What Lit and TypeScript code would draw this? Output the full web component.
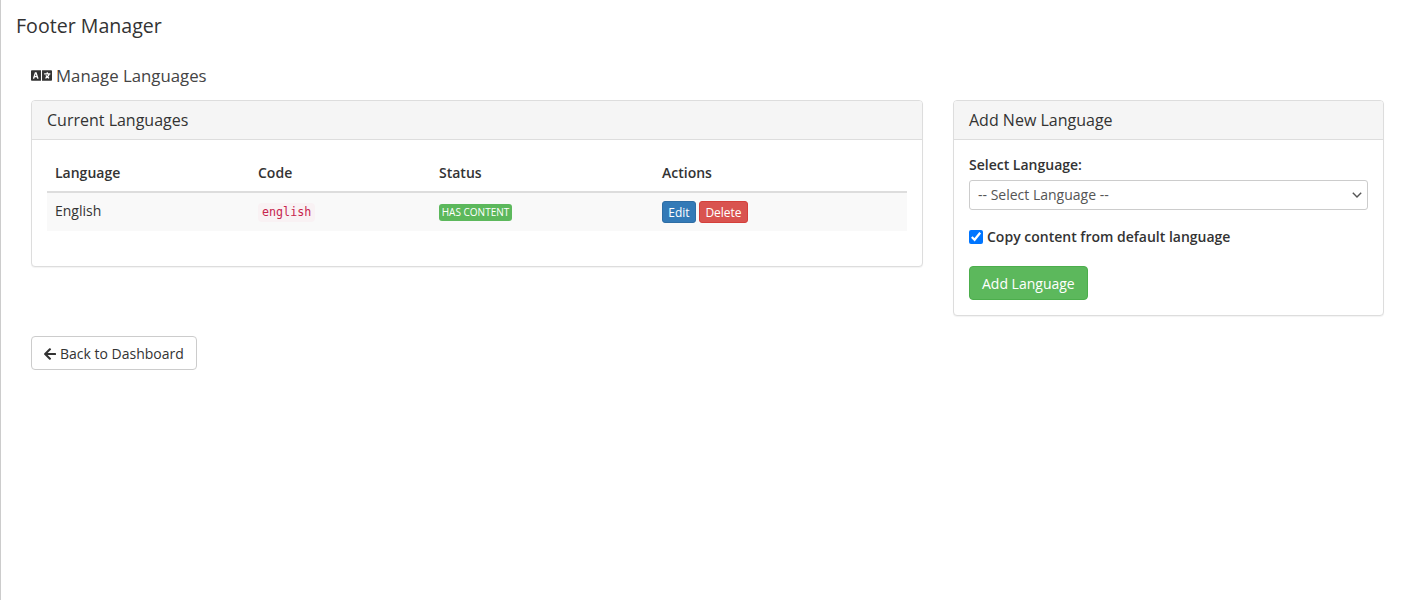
import { LitElement, html, css } from "lit";
import { customElement } from "lit/decorators.js";

@customElement("app-root")
export class AppRoot extends LitElement {
  static styles = css`
    :host { display: block; min-height: 600px; box-sizing: border-box; border-left: 1px solid #ccc; background: #fff; color: #333;
      font-family: "Open Sans", sans-serif; font-size: 14px; line-height: 20px; }
    * { box-sizing: border-box; }
    h1 { margin: 0; padding: 12px 15px 0; height: 39px; font-size: 19.6px; line-height: 27px; font-weight: 400; }
    .content { padding: 0 15px; }
    h2 { margin: 0; padding: 25px 15px 0; height: 61px; font-size: 16.8px; line-height: 24px; font-weight: 400; display: flex; align-items: flex-start; gap: 4px; color: #444; }
    h2 svg { width: 21px; height: 17px; margin-top: 3px; fill: #333; }
    .row { display: flex; align-items: flex-start; }
    .col-8 { width: 66.6667%; padding: 0 15px; }
    .col-4 { width: 33.3333%; padding: 0 15px; }
    .panel { border: 1px solid #ddd; border-radius: 4px; box-shadow: 0 1px 1px rgba(0,0,0,.05); background: #fff; }
    .heading { height: 39px; padding: 9px 15px; font-size: 16px; line-height: 20px; background: #f5f5f5; border-bottom: 1px solid #ddd; border-radius: 3px 3px 0 0; }
    .body { padding: 15px; }
    table { width: 100%; border-collapse: collapse; table-layout: fixed; margin-bottom: 20px; }
    th { text-align: left; font-weight: 600; padding: 8px; height: 37px; line-height: 20px; border-bottom: 2px solid #ddd; }
    td { padding: 7px 8px 9px; height: 39px; line-height: 20px; background: #f9f9f9; vertical-align: middle; }
    td.actions { padding: 8px; }
    code { display: inline-block; font-family: "DejaVu Sans Mono", monospace; font-size: 11.7px; line-height: 15px; padding: 2px 4px; color: #c7254e; background: #f9f2f4; border-radius: 4px; }
    .badge { display: inline-block; width: 73px; text-align: center; background: #5cb85c; color: #fff; font-size: 10px; line-height: 13px; font-weight: 400; padding: 2px 0; border-radius: 3px; vertical-align: middle; text-transform: uppercase; white-space: nowrap; }
    .btn { display: inline-block; font: inherit; border: 1px solid transparent; border-radius: 4px; padding: 7px 12px 5px; line-height: 20px; color: #fff; white-space: nowrap; }
    .xs { font-size: 12px; line-height: 18px; padding: 2px 5px 0; height: 22px; border-radius: 3px; }
    .primary { background: #337ab7; border-color: #2e6da4; min-width: 34px; text-align: center; }
    .danger { background: #d9534f; border-color: #d43f3a; margin-left: 3px; min-width: 49px; text-align: center; }
    .success { background: #5cb85c; border-color: #4cae4c; }
    .default { background: #fff; border-color: #ccc; color: #333; display: inline-flex; align-items: center; gap: 4px; }
    .default svg { width: 12px; height: 14px; fill: #333; }
    label.title { display: block; font-weight: 600; margin-bottom: 5px; }
    .select-wrap { position: relative; height: 30px; }
    select { display: block; appearance: none; width: 100%; height: 30px; font: inherit; line-height: 20px; color: #555; background: #fff; border: 1px solid #ccc; border-radius: 3px; padding: 0 8px; }
    .chevron { position: absolute; right: 6px; top: 12px; width: 10px; height: 6px; fill: none; stroke: #555; stroke-width: 1.4; pointer-events: none; }
    .check { display: flex; align-items: center; gap: 4px; font-weight: 600; margin: 17px 0 19px; height: 20px; }
    .check input { width: 14px; height: 14px; margin: 0; }
    .back { padding: 20px 15px 0; }
  `;

  render() {
    return html`
      <h1>Footer Manager</h1>
      <div class="content">
        <h2><svg viewBox="0 0 640 512"><path d="M152.1 236.2c-3.5-12.1-7.8-33.2-7.8-33.2h-.5s-4.3 21.1-7.8 33.2l-11.1 37.5H163zM616 96H336v320h280c13.3 0 24-10.7 24-24V120c0-13.3-10.7-24-24-24zm-24 120c0 6.6-5.4 12-12 12h-11.4c-6.9 23.6-21.7 47.4-42.7 69.9 8.4 6.4 17.1 12.5 26.1 18 5.5 3.4 7.3 10.5 4.1 16.2l-7.9 13.9c-3.4 5.9-10.9 7.8-16.7 4.3-12.6-7.8-24.5-16.1-35.4-24.9-10.9 8.7-22.7 17.1-35.4 24.9-5.8 3.5-13.3 1.6-16.7-4.3l-7.9-13.9c-3.2-5.6-1.4-12.8 4.2-16.2 9.3-5.7 18-11.7 26.1-18-7.9-8.4-14.9-17-21-25.7-4-5.7-2.2-13.6 3.7-17.1l6.5-3.9 7.3-4.3c5.4-3.2 12.4-1.7 16 3.4 5 7 10.8 14 17.4 20.9 13.5-14.2 23.8-28.9 30-43.2H412c-6.6 0-12-5.4-12-12v-16c0-6.6 5.4-12 12-12h64v-16c0-6.6 5.4-12 12-12h16c6.6 0 12 5.4 12 12v16h64c6.6 0 12 5.4 12 12zM0 120v272c0 13.3 10.7 24 24 24h280V96H24c-13.3 0-24 10.7-24 24zm58.9 216.1L116.4 167c1.7-4.9 6.2-8.1 11.4-8.1h32.5c5.1 0 9.7 3.3 11.4 8.1l57.5 169.1c2.6 7.8-3.1 15.9-11.4 15.9h-22.9a12 12 0 0 1-11.5-8.6l-9.4-31.9h-60.2l-9.1 31.8c-1.5 5.1-6.2 8.7-11.5 8.7H70.3c-8.2 0-14-8.1-11.4-15.9z"/></svg>Manage Languages</h2>
        <div class="row">
          <div class="col-8">
            <div class="panel">
              <div class="heading">Current Languages</div>
              <div class="body">
                <table>
                  <colgroup><col style="width:203px"><col style="width:181px"><col style="width:223px"><col></colgroup>
                  <thead><tr><th>Language</th><th>Code</th><th>Status</th><th>Actions</th></tr></thead>
                  <tbody><tr>
                    <td>English</td>
                    <td><code>english</code></td>
                    <td><span class="badge">Has content</span></td>
                    <td class="actions"><span class="btn xs primary">Edit</span><span class="btn xs danger">Delete</span></td>
                  </tr></tbody>
                </table>
              </div>
            </div>
          </div>
          <div class="col-4">
            <div class="panel">
              <div class="heading">Add New Language</div>
              <div class="body">
                <label class="title">Select Language:</label>
                <div class="select-wrap">
                  <select><option>-- Select Language --</option></select>
                  <svg class="chevron" viewBox="0 0 10 6"><path d="M.8.8 5 5l4.2-4.2"/></svg>
                </div>
                <label class="check"><input type="checkbox" checked />Copy content from default language</label>
                <span class="btn success">Add Language</span>
              </div>
            </div>
          </div>
        </div>
        <div class="back">
          <span class="btn default"><svg viewBox="0 0 448 512"><path d="M257.5 445.1l-22.2 22.2c-9.4 9.4-24.6 9.4-33.9 0L7 273c-9.4-9.4-9.4-24.6 0-33.9L201.4 44.7c9.4-9.4 24.6-9.4 33.9 0l22.2 22.2c9.5 9.5 9.3 25-.4 34.3L136.6 216H424c13.3 0 24 10.7 24 24v32c0 13.3-10.7 24-24 24H136.6l120.5 114.8c9.8 9.3 10 24.8.4 34.3z"/></svg>Back to Dashboard</span>
        </div>
      </div>
    `;
  }
}
